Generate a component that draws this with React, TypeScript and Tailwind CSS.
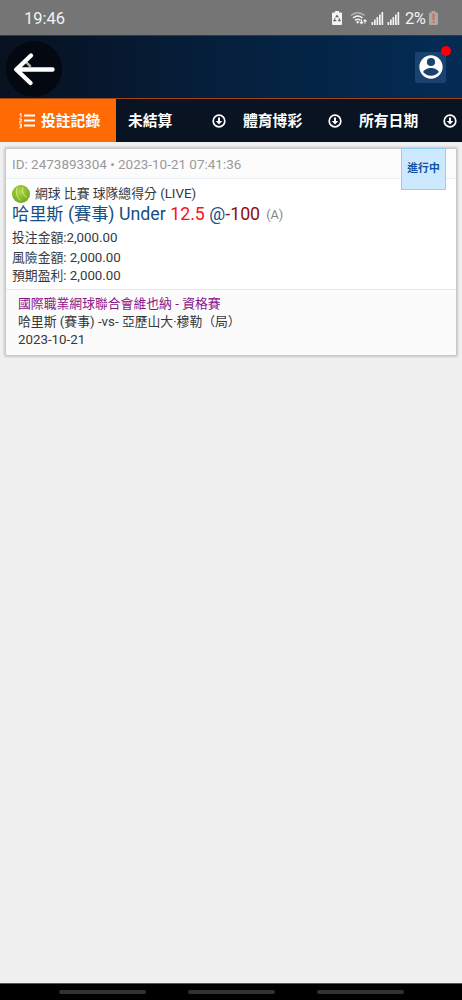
import React from "react";
import { clsx } from "clsx";

const filters = [
  { label: "未結算", width: "w-[115px]" },
  { label: "體育博彩", width: "w-[116px]" },
  { label: "所有日期", width: "w-[115px]" },
];

function SignalIcon() {
  return (
    <svg width="13" height="13" viewBox="0 0 13 13" fill="#f2f2f2">
      <rect x="0.5" y="10" width="1.7" height="3" />
      <rect x="3" y="7.5" width="1.7" height="5.5" />
      <rect x="5.5" y="5" width="1.7" height="8" />
      <rect x="8" y="2.5" width="1.7" height="10.5" />
      <rect x="10.5" y="0" width="1.7" height="13" />
    </svg>
  );
}

function StatusBar() {
  return (
    <div className="flex h-[35px] shrink-0 items-center bg-[#757575] pr-6 pl-6 text-[#f2f2f2]">
      <span className="mt-[3px] text-[16.5px]">19:46</span>
      <div className="mt-[1px] ml-auto flex items-center">
        <svg width="10" height="14" viewBox="0 0 10 14" className="mr-[8px]">
          <path d="M3 0h4v1.5h2a1 1 0 0 1 1 1V13a1 1 0 0 1-1 1H1a1 1 0 0 1-1-1V2.5a1 1 0 0 1 1-1h2z" fill="#f4f4f4" />
          <path d="M3.6 6.500 5 4.500l1.400 2M7 7.500l1 2.200H6M4.300 9.700H2l1-2.200" fill="none" stroke="#666" strokeWidth="1.200" />
        </svg>
        <svg width="18" height="15" viewBox="0 0 18 15" fill="none" className="mr-[3px]">
          <path d="M1 4.500c4-3.700 9.500-3.700 13.500 0" stroke="#b5b5b5" strokeWidth="1.400" />
          <path d="M3 7c3-2.600 6.500-2.600 9.500 0M5 9.300c1.800-1.500 3.700-1.500 5.500 0" stroke="#f2f2f2" strokeWidth="1.500" />
          <path d="m6 11 1.700-1.200L9.300 11l-1.600 1.800z" fill="#f2f2f2" />
          <path d="M11.500 8.500v3.800m-1.500-1.300 1.500 1.600 1.500-1.600M15 12.500V9m-1.500 1.300L15 8.700l1.500 1.600" stroke="#f2f2f2" strokeWidth="1.100" />
        </svg>
        <SignalIcon />
        <span className="w-[3.5px]" />
        <SignalIcon />
        <span className="mt-[2px] ml-[5px] w-[22px] text-[16.5px] tracking-[-0.5px]">2%</span>
        <svg width="9" height="14" viewBox="0 0 9 14" className="ml-[2px]">
          <path d="M2.500 0h4v1.500H8a1 1 0 0 1 1 1V13a1 1 0 0 1-1 1H1a1 1 0 0 1-1-1V2.500a1 1 0 0 1 1-1h1.500z" fill="#a9a9a9" />
          <path d="M4.500 2.500v6.500M4.500 10v2" stroke="#ec6542" strokeWidth="2" />
        </svg>
      </div>
    </div>
  );
}

function Header() {
  return (
    <header className="flex h-[63px] shrink-0 items-center justify-between border-t border-[#2a3b4e] bg-linear-to-r from-[#071120] via-[#05203e] to-[#032c55] pr-4 pl-[6px]">
      <button className="mt-[4px] flex size-[56px] items-center justify-center rounded-full bg-[#040911]">
        <svg width="56" height="56" viewBox="0 0 56 56" fill="none" strokeLinecap="round" strokeLinejoin="round">
          <path d="m19 20 5 5" stroke="#aaa" strokeWidth="2.500" />
          <path d="M46.500 28.500H10.300M25 14.500 10.300 28.500 24.500 42" stroke="#fff" strokeWidth="4.400" />
        </svg>
      </button>
      <button className="relative flex size-[31px] items-center justify-center rounded-[2px] bg-[#194270]">
        <svg width="28" height="28" viewBox="0 0 24 24" fill="#fff">
          <path d="M12 2C6.480 2 2 6.480 2 12s4.480 10 10 10 10-4.480 10-10S17.520 2 12 2zm0 2.200a3.500 3.500 0 1 1 0 7 3.500 3.500 0 0 1 0-7zm0 15.300c-2.800 0-5.200-1.200-6.700-3.200.7-2.100 4.300-3.400 6.700-3.400s6 1.300 6.700 3.400c-1.500 2-3.900 3.200-6.700 3.200z" />
        </svg>
        <span className="absolute -top-[6px] -right-[5px] size-[10px] rounded-full bg-[#fa0006]" />
      </button>
    </header>
  );
}

function FilterBar() {
  return (
    <nav className="flex h-[44px] shrink-0 border-t border-[#a34213] bg-[#091321] text-[14.8px] font-bold text-white">
      <div className="flex w-[116px] items-center bg-[#ff6a04] pl-[19px]">
        <svg width="17" height="16" viewBox="0 0 17 16" fill="none" stroke="#fff">
          <path d="M5 2.500h11M5 7.500h11M5 12.500h11" strokeWidth="2.200" />
          <path d="M.5 1.300 2 .5v4M.3 6h2v1.500l-2 1.500h2.500M.3 11h2v1.800H1h1.300v2H.3" strokeWidth="1" />
        </svg>
        <span className="mt-[2px] ml-[5px]">投註記錄</span>
      </div>
      {filters.map((filter) => (
        <div key={filter.label} className={clsx("flex items-center justify-between pr-[5.5px] pl-3", filter.width)}>
          <span className="mt-[2px]">{filter.label}</span>
          <svg width="14" height="14" viewBox="0 0 14 14" fill="none" stroke="#fff">
            <circle cx="7" cy="7" r="5.800" strokeWidth="1.700" />
            <path d="M7 3.500v5" strokeWidth="2" />
            <path d="M3.700 7h6.600L7 10.500z" fill="#fff" stroke="none" />
          </svg>
        </div>
      ))}
    </nav>
  );
}

// Chinese glyphs run a little smaller than the Latin ones beside them
function Zh({ children }: { children: React.ReactNode }) {
  return <span className="text-[0.965em]">{children}</span>;
}

function BetCard() {
  return (
    <article className="mx-[5px] mt-[6px] border border-[#c9c9c9] bg-white text-[13.3px] leading-[18px] text-[#36383c] shadow-[0_0_3px_rgba(0,0,0,0.3)]">
      <div className="relative flex h-[30px] items-center border-b border-[#e9f0f6] bg-[#fcfcfc] pl-[6px] text-[13.48px] text-[#999]">
        ID: 2473893304 • 2023-10-21 07:41:36
        <span className="absolute -top-px right-[10px] flex h-[42px] w-[45px] items-center justify-center border border-[#8ed0f6] bg-[#cde9fd] text-[10.8px] font-bold text-[#1151a8]">
          進行中
        </span>
      </div>
      <div className="h-[110px] pt-[5px] pl-[6px]">
        <div className="flex h-[19px] items-center">
          <svg width="18" height="18" viewBox="0 0 18 18" className="mt-[1px] mr-[5px]">
            <defs>
              <radialGradient id="ball" cx="0.450" cy="0.350" r="0.650">
                <stop offset="0" stopColor="#b0dc38" />
                <stop offset="1" stopColor="#6da622" />
              </radialGradient>
            </defs>
            <circle cx="9" cy="9" r="9" fill="url(#ball)" />
            <path d="M5.500 2.500c-2 4-1.500 8 3 13M11 2.500c-1.500 4 0 7.500 4 10" fill="none" stroke="#d9ebaa" strokeWidth="0.900" />
          </svg>
          <span className="whitespace-pre"><Zh>網球 比賽 球隊總得分</Zh> (LIVE)</span>
        </div>
        <div className="mb-[2px] flex h-[21px] items-center text-[17.8px] whitespace-pre text-[#174f84]">
          <span><Zh>哈里斯</Zh> (<Zh>賽事</Zh>) Under </span>
          <span className="text-[#fb1018]">12.5</span> @<span className="text-[#8f0b10]">-100</span>
          <span className="mt-[3px] ml-[6px] text-[12.8px] text-[#858585]">(A)</span>
        </div>
        <div className="flex h-[23px] items-center"><Zh>投注金額</Zh>:2,000.00</div>
        <div className="flex h-[18px] items-center whitespace-pre"><Zh>風險金額</Zh>: 2,000.00</div>
        <div className="flex h-[18px] items-center whitespace-pre"><Zh>預期盈利</Zh>: 2,000.00</div>
      </div>
      <div className="h-[66px] border-t border-[#e0eaf1] bg-[#fbfbfb] pt-[5px] pl-[12px]">
        <div className="text-[#8a148a]"><Zh>國際職業網球聯合會維也納</Zh> - <Zh>資格賽</Zh></div>
        <div><Zh>哈里斯</Zh> (<Zh>賽事</Zh>) -vs- <Zh>亞歷山大·穆勒（局）</Zh></div>
        <div>2023-10-21</div>
      </div>
    </article>
  );
}

export default function App() {
  return (
    <div className="flex h-[1000px] w-[462px] flex-col overflow-hidden bg-[#f0f0f0] font-[Roboto,'Noto_Sans_CJK_TC',sans-serif]">
      <StatusBar />
      <Header />
      <FilterBar />
      <main className="flex-1">
        <BetCard />
      </main>
      <div className="flex h-[17px] shrink-0 items-center justify-center gap-[42px] border-t border-[#555] bg-black">
        <span className="h-[4px] w-[87px] rounded-full bg-[#323232]" />
        <span className="h-[4px] w-[87px] rounded-full bg-[#323232]" />
        <span className="h-[4px] w-[87px] rounded-full bg-[#323232]" />
      </div>
    </div>
  );
}
